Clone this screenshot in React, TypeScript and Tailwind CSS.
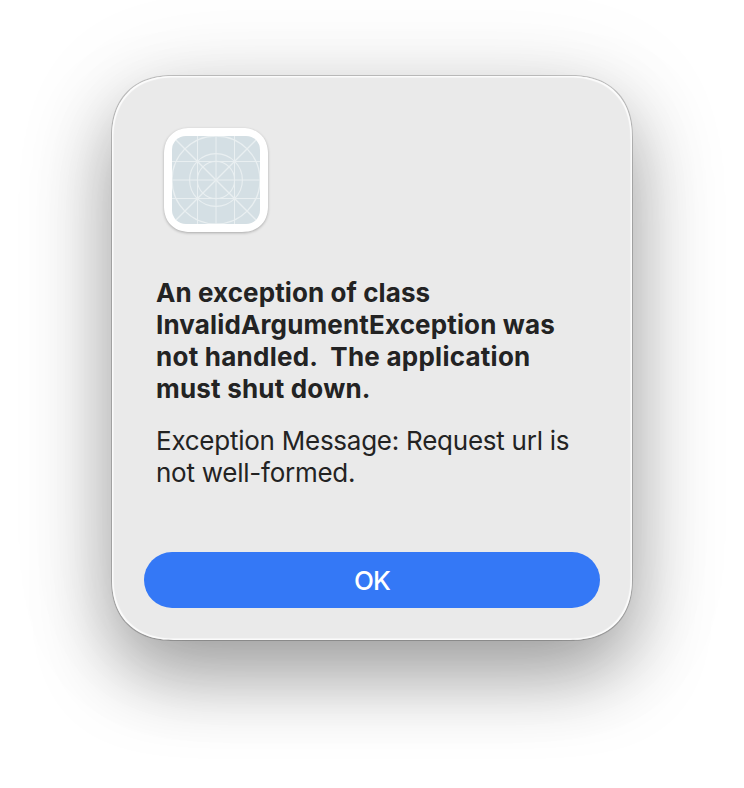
import type { ReactNode } from "react";

function AppIcon() {
  return (
    <div className="w-26 h-26 p-2 rounded-[26px] [corner-shape:superellipse(1.15)] bg-white shadow-[0_1px_3px_rgba(0,0,0,0.28)]">
      <svg
        viewBox="0 0 88 88"
        fill="none"
        stroke="#e9eff1"
        strokeWidth="1"
        className="w-22 h-22 rounded-[14px] bg-[#d4dfe4]"
      >
        {/* grid */}
        <path d="M25.5 0V88M44 0V88M62.5 0V88" />
        <path d="M0 25.5H88M0 44H88M0 62.5H88" />
        {/* diagonals */}
        <path d="M0 0L88 88M88 0L0 88" strokeWidth="1.4" />
        <circle cx="44" cy="44" r="18.6" strokeWidth="1.1" />
        <circle cx="44" cy="44" r="26.4" strokeWidth="1.1" />
        <circle cx="44" cy="44" r="44" strokeWidth="1.3" />
      </svg>
    </div>
  );
}

function Button({ children }: { children: ReactNode }) {
  return (
    <button
      type="button"
      className="w-full h-14 pt-0.5 rounded-full bg-[#3478f6] text-white text-[26px] font-medium tracking-[-0.8px] leading-none"
    >
      {children}
    </button>
  );
}

export default function App() {
  return (
    <main className="flex justify-center w-full h-[788px] pt-19 overflow-hidden bg-white font-[Inter,'Liberation_Sans',sans-serif]">
      <div
        role="alertdialog"
        className="flex flex-col w-130 h-141 px-8 pt-13 pb-8 rounded-[62px] [corner-shape:superellipse(1.2)] bg-[#eaeaea] text-[#232323] shadow-[inset_0_0_1px_1.5px_rgba(255,255,255,0.85),0_0_0_1px_rgba(0,0,0,0.2),0_36px_76px_rgba(0,0,0,0.34),0_10px_110px_rgba(0,0,0,0.1)]"
      >
        <div className="pl-5">
          <AppIcon />
        </div>

        <div className="mt-[45px] pl-3 text-[26px] leading-8 whitespace-pre">
          <h1 className="font-bold">
            <span className="block tracking-[0.09px]">An exception of class</span>
            <span className="block tracking-[0.14px]">InvalidArgumentException was</span>
            <span className="block tracking-[0.25px]">{"not handled.  The application"}</span>
            <span className="block tracking-[0.2px]">must shut down.</span>
          </h1>
          <p className="mt-5 tracking-[-0.25px]">
            <span className="block">Exception Message: Request url is</span>
            <span className="block">not well-formed.</span>
          </p>
        </div>

        <div className="mt-auto">
          <Button>OK</Button>
        </div>
      </div>
    </main>
  );
}
